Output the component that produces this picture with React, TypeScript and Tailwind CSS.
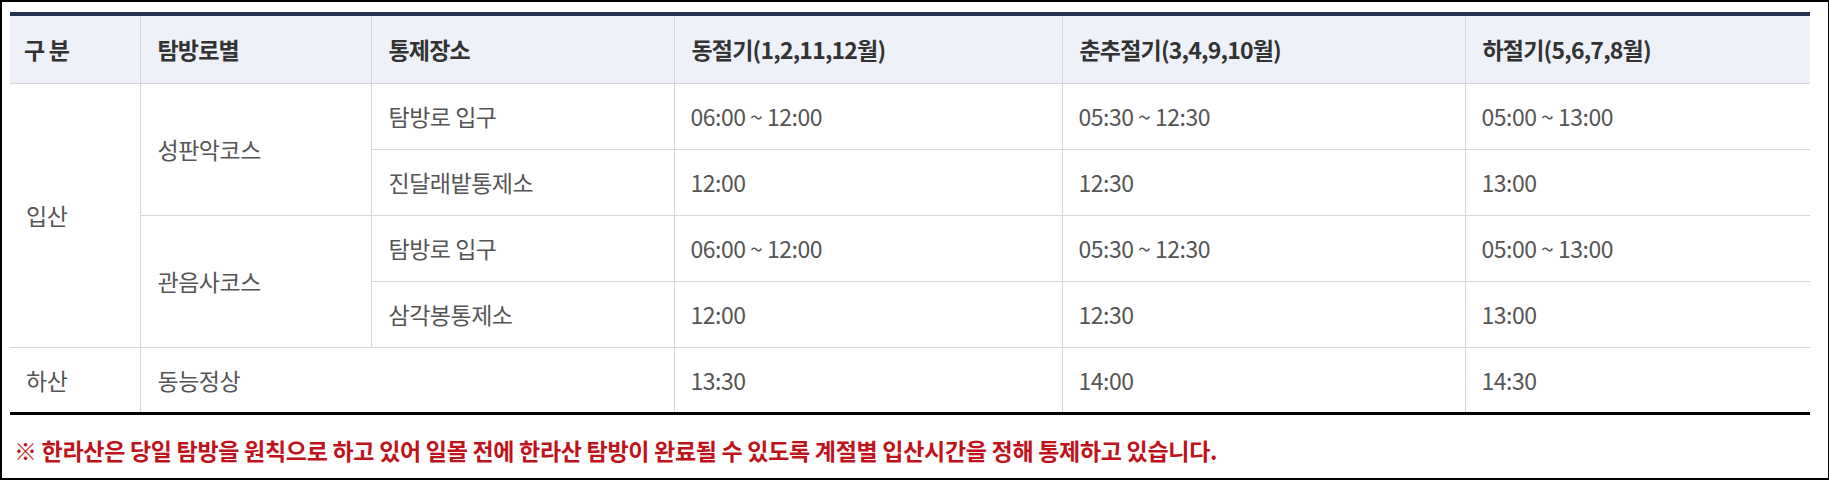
import React from "react";

const seasons = ["동절기(1,2,11,12월)", "춘추절기(3,4,9,10월)", "하절기(5,6,7,8월)"];

const entry = ["06:00 ~ 12:00", "05:30 ~ 12:30", "05:00 ~ 13:00"];
const check = ["12:00", "12:30", "13:00"];
const down = ["13:30", "14:00", "14:30"];

const cell = "h-[66px] border-b border-[#d6d6d6] pl-[16px] text-left align-middle font-normal text-[#555]";
const sep = "border-r border-[#d6d6d6]";

const Times = ({ values }: { values: string[] }) => (
  <>
    {values.map((v, i) => (
      <td key={i} className={`${cell} ${i < values.length - 1 ? sep : ""}`}>
        {v}
      </td>
    ))}
  </>
);

export default function App() {
  return (
    <div
      className="w-[1829px] h-[480px] bg-white border-l-2 border-t-2 border-b-2 border-r border-black pl-[8px] pt-[10px]"
      style={{ fontFamily: '"Noto Sans CJK KR", "Noto Sans", sans-serif' }}
    >
      <table className="w-[1800px] table-fixed border-collapse text-[23px] tracking-[-0.5px] leading-[30px]">
        <colgroup>
          <col className="w-[130px]" />
          <col className="w-[231px]" />
          <col className="w-[303px]" />
          <col className="w-[388px]" />
          <col className="w-[403px]" />
          <col className="w-[345px]" />
        </colgroup>
        <thead>
          <tr className="bg-[#eef1f8]">
            {["구 분", "탐방로별", "통제장소", ...seasons].map((h, i) => (
              <th
                key={h}
                className={`h-[69px] border-t-4 border-t-[#263050] border-b border-b-[#d6d6d6] pl-[14px] text-left align-middle font-bold tracking-[-0.8px] text-[#333] ${
                  i < 5 ? "border-r border-r-[#d6d6d6]" : ""
                } ${i > 0 ? "pl-[17px]" : ""}`}
              >
                {h}
              </th>
            ))}
          </tr>
        </thead>
        <tbody>
          <tr>
            <td rowSpan={4} className={`${cell} ${sep} pl-[14px]`}>
              입산
            </td>
            <td rowSpan={2} className={`${cell} ${sep} pl-[17px]`}>
              성판악코스
            </td>
            <td className={`${cell} ${sep} pl-[17px]`}>탐방로 입구</td>
            <Times values={entry} />
          </tr>
          <tr>
            <td className={`${cell} ${sep} pl-[17px]`}>진달래밭통제소</td>
            <Times values={check} />
          </tr>
          <tr>
            <td rowSpan={2} className={`${cell} ${sep} pl-[17px]`}>
              관음사코스
            </td>
            <td className={`${cell} ${sep} pl-[17px]`}>탐방로 입구</td>
            <Times values={entry} />
          </tr>
          <tr>
            <td className={`${cell} ${sep} pl-[17px]`}>삼각봉통제소</td>
            <Times values={check} />
          </tr>
          <tr>
            <td className={`${cell} ${sep} pl-[14px] border-b-[3px] border-b-black`}>하산</td>
            <td colSpan={2} className={`${cell} ${sep} pl-[17px] border-b-[3px] border-b-black`}>
              동능정상
            </td>
            {down.map((v, i) => (
              <td
                key={v}
                className={`${cell} border-b-[3px] border-b-black ${i < 2 ? sep : ""}`}
              >
                {v}
              </td>
            ))}
          </tr>
        </tbody>
      </table>
      <p className="pt-[20px] pl-[4px] text-[23px] leading-[30px] tracking-[-0.3px] font-bold text-[#c0121a]">
        ※ 한라산은 당일 탐방을 원칙으로 하고 있어 일몰 전에 한라산 탐방이 완료될 수 있도록 계절별 입산시간을 정해 통제하고 있습니다.
      </p>
    </div>
  );
}
